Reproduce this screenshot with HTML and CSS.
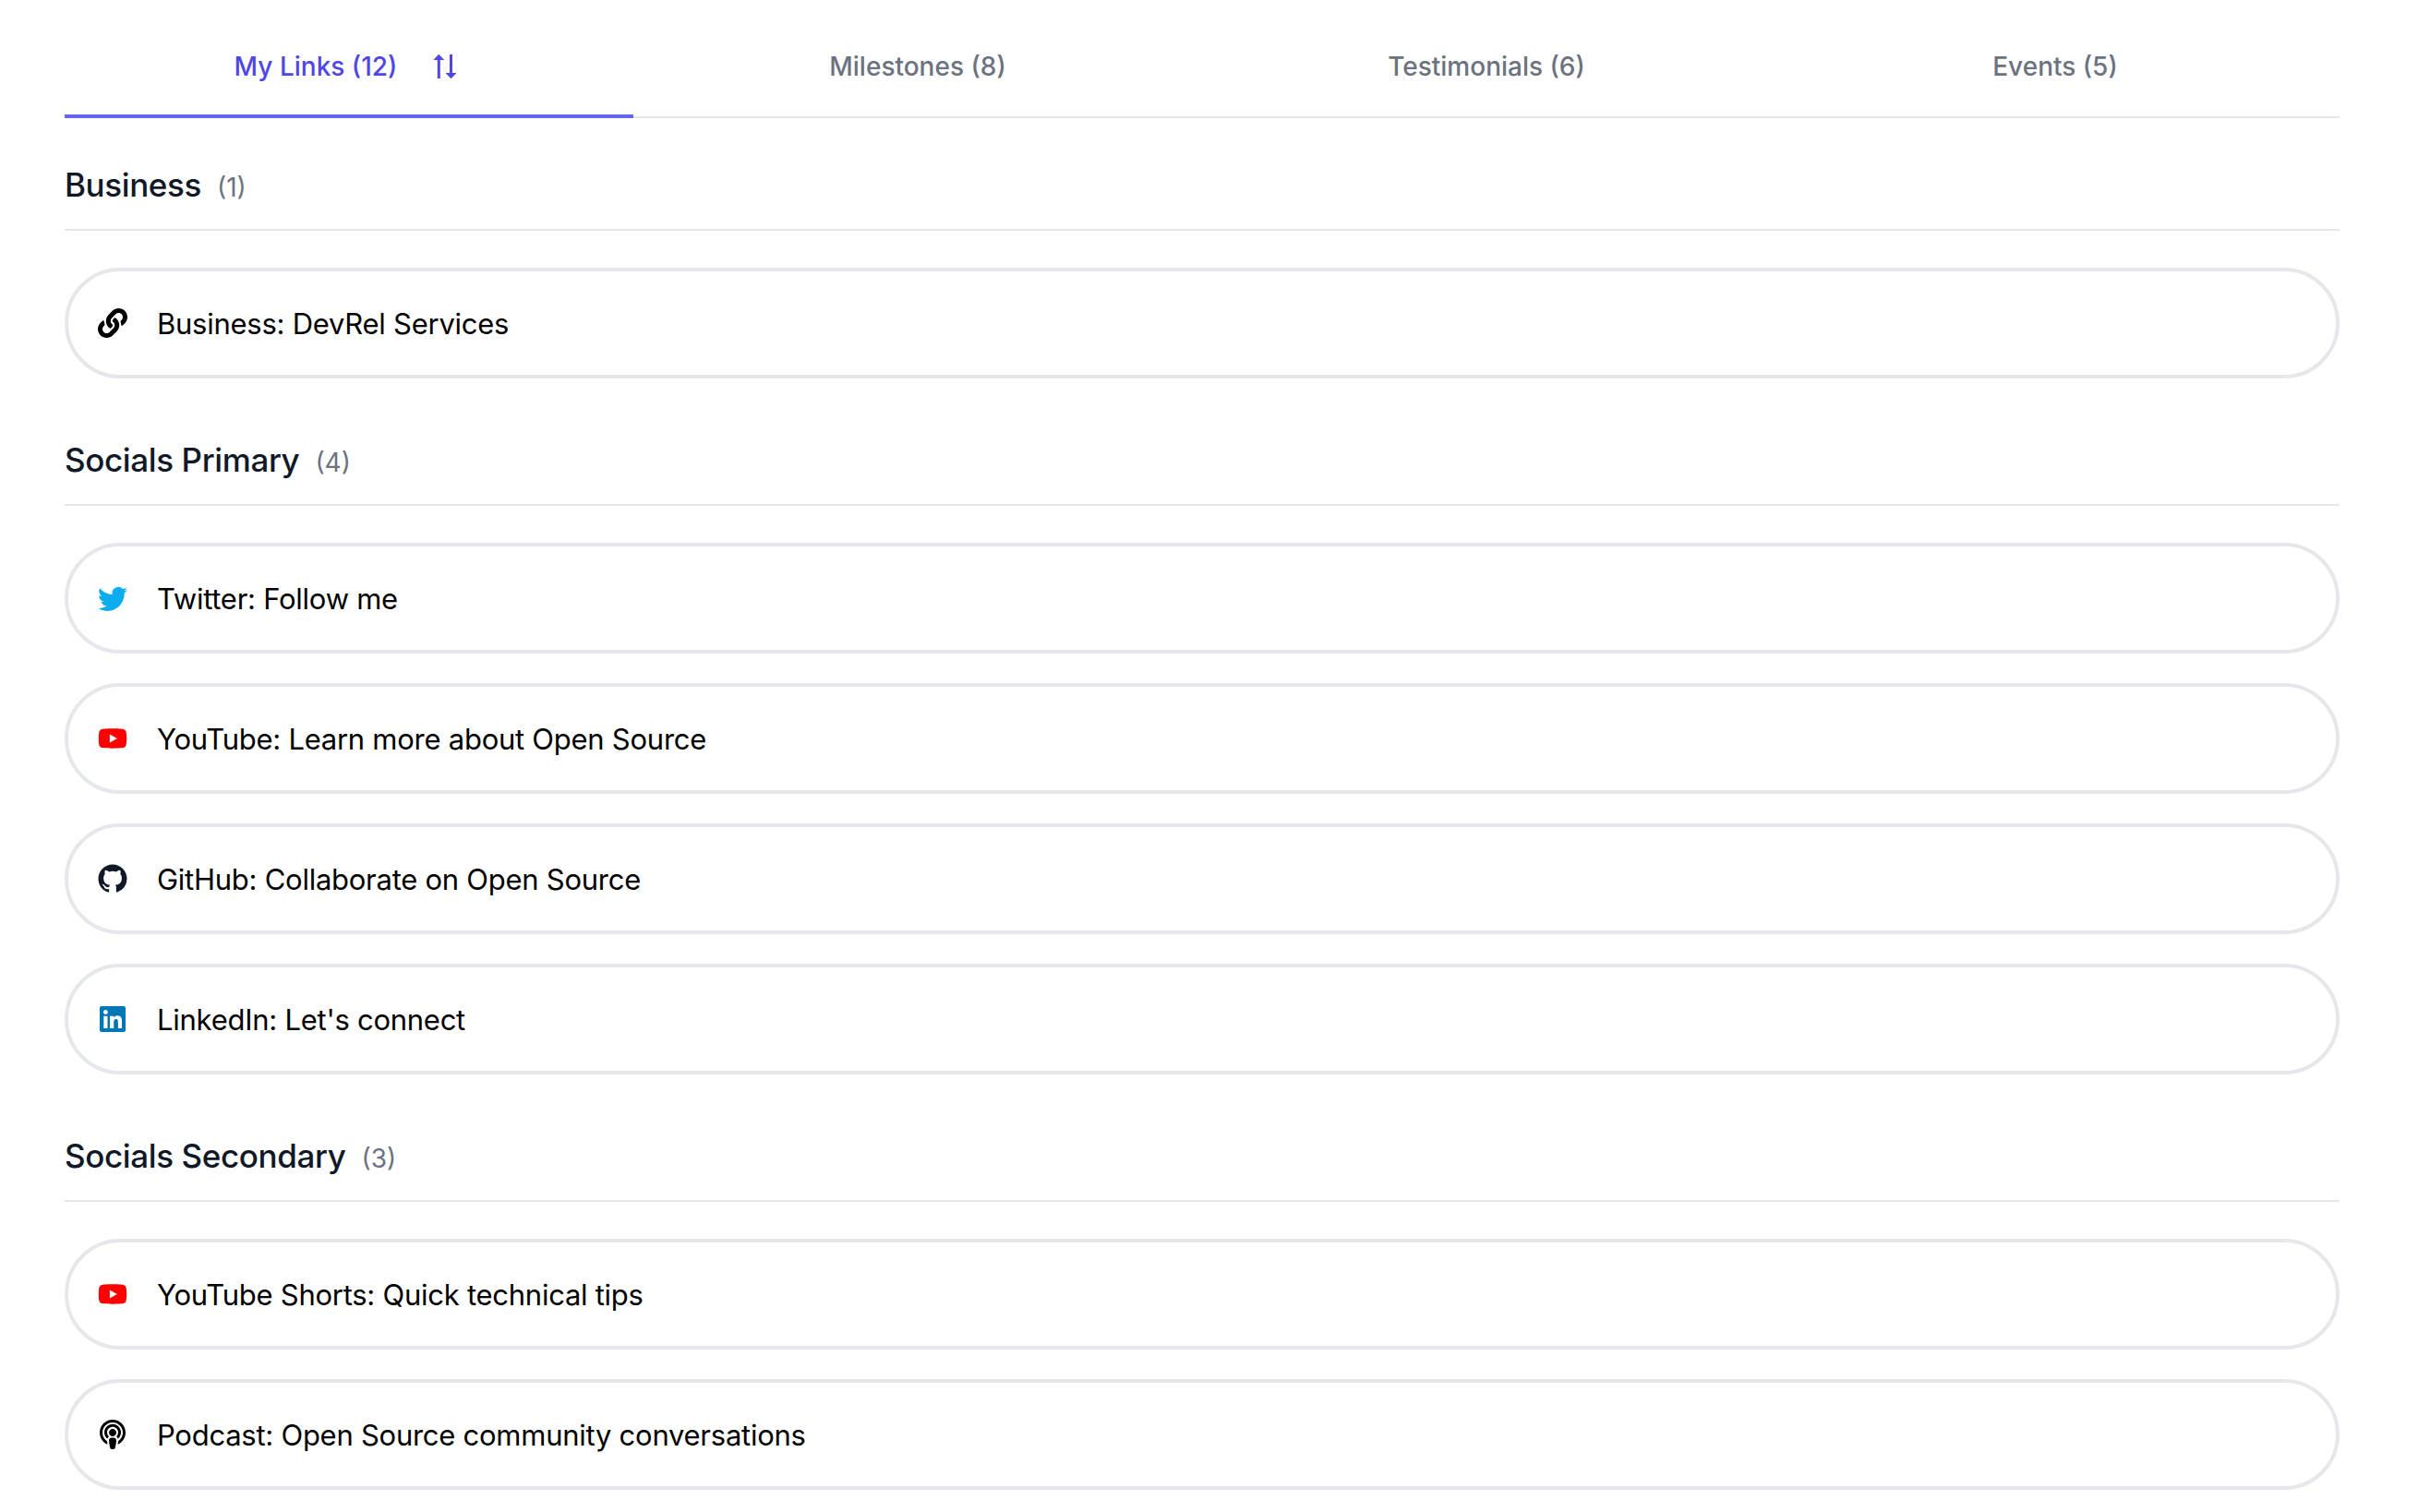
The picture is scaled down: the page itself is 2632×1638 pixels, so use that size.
FILE: index.html
```html
<!DOCTYPE html>
<html lang="en">
<head>
<meta charset="utf-8">
<title>My Links</title>
<link rel="stylesheet" href="styles.css">
</head>
<body>
<svg class="sprite" aria-hidden="true">
  <symbol id="youtube" viewBox="0 0 576 512"><path d="M549.655 124.083c-6.281-23.650-24.787-42.276-48.284-48.597C458.781 64 288 64 288 64S117.220 64 74.629 75.486c-23.497 6.322-42.003 24.947-48.284 48.597-11.412 42.867-11.412 132.305-11.412 132.305s0 89.438 11.412 132.305c6.281 23.650 24.787 41.500 48.284 47.821C117.220 448 288 448 288 448s170.780 0 213.371-11.486c23.497-6.321 42.003-24.171 48.284-47.821 11.412-42.867 11.412-132.305 11.412-132.305s0-89.438-11.412-132.305zm-317.510 213.508V175.185l142.739 81.205-142.739 81.201z"/></symbol>
</svg>
<main class="page">
  <nav class="tabs">
    <a class="tab tab-active"><span>My Links (12)</span>
      <svg class="sort" viewBox="0 0 34 28"><path d="M5.800 27V7H1.300L7.300 .700 13.300 7H8.800v20zM19 1v20h-4.500l6 6.200 6-6.200H22V1z"/></svg></a>
    <a class="tab">Milestones (8)</a>
    <a class="tab">Testimonials (6)</a>
    <a class="tab">Events (5)</a>
  </nav>
  <section class="group">
    <h2 class="heading">Business <span class="count">(1)</span></h2>
    <a class="link"><svg class="icon" viewBox="0 0 512 512"><path d="M326.612 185.391c59.747 59.809 58.927 155.698.36 214.590-.110.120-.240.250-.360.370l-67.200 67.200c-59.270 59.270-155.699 59.262-214.960 0-59.270-59.260-59.270-155.700 0-214.960l37.106-37.106c9.840-9.840 26.786-3.300 27.294 10.606.648 17.722 3.826 35.527 9.690 52.721 1.986 5.822.567 12.262-3.783 16.612l-13.087 13.087c-28.026 28.026-28.905 73.660-1.155 101.960 28.024 28.579 74.086 28.749 102.325.510l67.200-67.190c28.191-28.191 28.073-73.757 0-101.830-3.701-3.694-7.429-6.564-10.341-8.569a16.037 16.037 0 0 1-6.947-12.606c-.396-10.567 3.348-21.456 11.698-29.806l21.054-21.055c5.521-5.521 14.182-6.199 20.584-1.731a152.482 152.482 0 0 1 20.522 17.197zM467.547 44.449c-59.261-59.262-155.690-59.270-214.960 0l-67.200 67.200c-.120.120-.250.250-.360.370-58.566 58.892-59.387 154.781.360 214.590a152.454 152.454 0 0 0 20.521 17.196c6.402 4.468 15.064 3.789 20.584-1.731l21.054-21.055c8.350-8.350 12.094-19.239 11.698-29.806a16.037 16.037 0 0 0-6.947-12.606c-2.912-2.005-6.640-4.875-10.341-8.569-28.073-28.073-28.191-73.639 0-101.830l67.200-67.190c28.239-28.239 74.300-28.069 102.325.510 27.750 28.300 26.872 73.934-1.155 101.960l-13.087 13.087c-4.350 4.350-5.769 10.790-3.783 16.612 5.864 17.194 9.042 34.999 9.690 52.721.509 13.906 17.454 20.446 27.294 10.606l37.106-37.106c59.271-59.259 59.271-155.699.001-214.959z"/></svg><span>Business: DevRel Services</span></a>
  </section>
  <section class="group">
    <h2 class="heading">Socials Primary <span class="count">(4)</span></h2>
    <a class="link"><svg class="icon twitter" viewBox="0 0 16 16"><path d="M5.026 15c6.038 0 9.341-5.003 9.341-9.334q.002-.211-.006-.422A6.700 6.700 0 0 0 16 3.542a6.700 6.700 0 0 1-1.889.518 3.300 3.300 0 0 0 1.447-1.817 6.500 6.500 0 0 1-2.087.793A3.286 3.286 0 0 0 7.875 6.030a9.320 9.320 0 0 1-6.767-3.429 3.290 3.290 0 0 0 1.018 4.382A3.300 3.300 0 0 1 .640 6.575v.045a3.290 3.290 0 0 0 2.632 3.218 3.200 3.200 0 0 1-.865.115 3 3 0 0 1-.614-.057 3.280 3.280 0 0 0 3.067 2.277A6.600 6.600 0 0 1 .780 13.580a6 6 0 0 1-.780-.045A9.340 9.340 0 0 0 5.026 15"/></svg><span>Twitter: Follow me</span></a>
    <a class="link"><svg class="icon youtube"><use href="#youtube"/></svg><span>YouTube: Learn more about Open Source</span></a>
    <a class="link"><svg class="icon github" viewBox="-.25 -.2 16.5 16.5"><path d="M8 0C3.580 0 0 3.580 0 8c0 3.540 2.290 6.530 5.470 7.590.4.070.550-.170.550-.380 0-.190-.010-.820-.010-1.490-2.010.370-2.530-.490-2.690-.940-.090-.230-.480-.940-.820-1.130-.280-.150-.680-.520-.010-.530.630-.010 1.080.580 1.230.820.720 1.210 1.870.870 2.330.660.070-.520.280-.870.510-1.070-1.780-.2-3.640-.890-3.640-3.950 0-.870.310-1.590.820-2.150-.080-.2-.360-1.020.080-2.120 0 0 .670-.210 2.200.820.640-.180 1.320-.270 2-.270s1.360.090 2 .270c1.530-1.040 2.200-.820 2.200-.820.440 1.100.160 1.920.080 2.120.510.560.820 1.270.820 2.150 0 3.070-1.870 3.750-3.650 3.950.290.250.540.730.540 1.480 0 1.070-.010 1.930-.010 2.200 0 .210.150.460.550.380A8.010 8.010 0 0 0 16 8c0-4.420-3.580-8-8-8"/></svg><span>GitHub: Collaborate on Open Source</span></a>
    <a class="link"><svg class="icon linkedin" viewBox="0 0 448 512"><path d="M416 32H31.900C14.300 32 0 46.500 0 64.300v383.400C0 465.500 14.300 480 31.900 480H416c17.600 0 32-14.500 32-32.300V64.300c0-17.800-14.400-32.300-32-32.300zM135.400 416H69V202.200h66.500V416zm-33.200-243c-21.300 0-38.500-17.300-38.500-38.500S80.900 96 102.200 96c21.200 0 38.500 17.300 38.500 38.500 0 21.300-17.200 38.500-38.500 38.500zm282.100 243h-66.400V312c0-24.800-.5-56.700-34.500-56.700-34.600 0-39.900 27-39.900 54.900V416h-66.400V202.200h63.700v29.200h.9c8.900-16.800 30.600-34.500 62.900-34.500 67.200 0 79.700 44.300 79.700 101.900V416z"/></svg><span>LinkedIn: Let's connect</span></a>
  </section>
  <section class="group">
    <h2 class="heading">Socials Secondary <span class="count">(3)</span></h2>
    <a class="link"><svg class="icon youtube"><use href="#youtube"/></svg><span>YouTube Shorts: Quick technical tips</span></a>
    <a class="link"><svg class="icon" viewBox="0 0 448 512"><path d="M267.429 488.563C262.286 507.573 242.858 512 224 512c-18.857 0-38.286-4.427-43.428-23.437C172.927 460.134 160 388.898 160 355.750c0-35.156 31.142-43.750 64-43.750s64 8.594 64 43.750c0 32.949-12.871 104.179-20.571 132.813zM156.867 288.554c-18.693-18.308-29.958-44.173-28.784-72.599 2.054-49.724 42.395-89.956 92.124-91.881C274.862 121.958 320 165.807 320 220c0 26.827-11.064 51.116-28.866 68.552-2.675 2.620-2.401 6.986.628 9.187 9.312 6.765 16.460 15.343 21.234 25.363 1.741 3.654 6.497 4.660 9.449 1.891 28.826-27.043 46.553-65.783 45.511-108.565-1.855-76.206-63.595-138.208-139.793-140.369C146.869 73.753 80 139.215 80 220c0 41.361 17.532 78.700 45.550 104.989 2.953 2.771 7.711 1.770 9.453-1.887 4.774-10.021 11.923-18.598 21.235-25.363 3.029-2.200 3.304-6.566.629-9.185zM224 0C100.204 0 0 100.185 0 224c0 89.992 52.602 165.647 125.739 201.408 4.333 2.118 9.267-1.544 8.535-6.310-2.382-15.512-4.342-30.946-5.406-44.339-.146-1.836-1.149-3.486-2.678-4.512-47.400-31.806-78.564-86.016-78.187-147.347.592-96.237 79.290-174.648 175.529-174.899C320.793 47.747 400 126.797 400 224c0 61.932-32.158 116.490-80.650 147.867-.999 14.037-3.069 30.588-5.624 47.230-.732 4.767 4.203 8.429 8.535 6.310C395.227 389.727 448 314.187 448 224 448 100.205 347.815 0 224 0zm0 160c-35.346 0-64 28.654-64 64s28.654 64 64 64 64-28.654 64-64-28.654-64-64-64z"/></svg><span>Podcast: Open Source community conversations</span></a>
  </section>
</main>
</body>
</html>
```
FILE: styles.css
```css
* { box-sizing: border-box; }
body {
  margin: 0;
  background: #fff;
  font-family: Inter, "Liberation Sans", sans-serif;
  color: #000;
  height: 1638px;
  overflow: hidden;
}
.sprite { position: absolute; width: 0; height: 0; }
.page { padding: 16px 98px 0 70px; }
.tabs {
  display: grid;
  grid-template-columns: repeat(4, 1fr);
  height: 112px;
  box-shadow: inset 0 -2px #e5e7eb;
}
.tab {
  display: flex;
  align-items: center;
  justify-content: center;
  padding-top: 4px;
  font-size: 28px;
  font-weight: 500;
  color: #6b7280;
  border-bottom: 4px solid transparent;
}
.tab-active { color: #4f46e5; border-bottom-color: #6366f1; }
.sort { width: 34px; height: 28px; margin-left: 38px; fill: currentColor; }
.heading {
  display: flex;
  align-items: baseline;
  height: 122px;
  margin: 0 0 40px;
  padding-top: 48px;
  border-bottom: 2px solid #e5e7eb;
  font-size: 35px;
  line-height: 48px;
  font-weight: 500;
  letter-spacing: -0.38px;
  color: #111827;
}
.group + .group .heading { height: 138px; padding-top: 64px; }
.count {
  margin-left: 17px;
  font-size: 28px;
  font-weight: 400;
  letter-spacing: 0;
  color: #6b7280;
}
.link {
  display: flex;
  align-items: center;
  gap: 32px;
  height: 120px;
  padding: 0 32px;
  border: 4px solid #e5e7eb;
  border-radius: 60px;
  font-size: 31px;
  letter-spacing: -0.26px;
}
.link + .link { margin-top: 32px; }
.icon { width: 32px; height: 32px; flex: none; }
.twitter { fill: #0cadef; }
.youtube { fill: #f00; }
.github { fill: #111827; }
.linkedin { fill: #0077b5; }
```
